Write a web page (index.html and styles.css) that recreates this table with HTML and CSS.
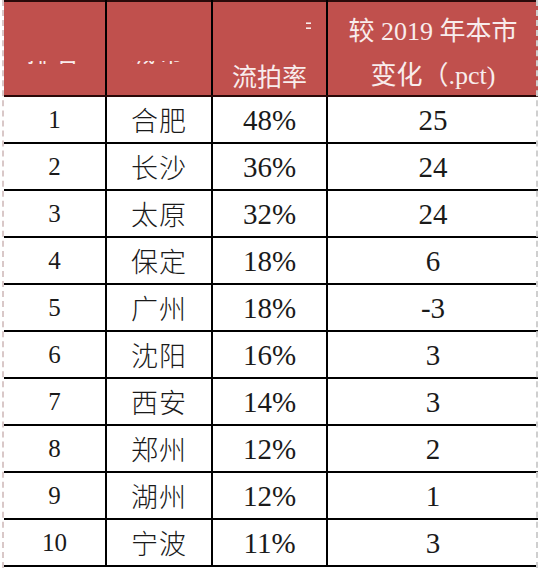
FILE: index.html
```html
<!DOCTYPE html>
<html lang="zh">
<head>
<meta charset="utf-8">
<link rel="stylesheet" href="styles.css">
</head>
<body>
<div class="frame">
<table class="rank-table">
  <colgroup>
    <col class="c-rank"><col class="c-city"><col class="c-rate"><col class="c-chg">
  </colgroup>
  <thead>
    <tr>
      <th class="h-cut"><span class="clip"><span class="clip-in">排名</span></span></th>
      <th class="h-cut"><span class="clip"><span class="clip-in">城市</span></span></th>
      <th class="h-rate"><span class="frag"><span class="frag-in">年</span></span><span class="rate-label">流拍率</span></th>
      <th class="h-chg"><div class="l1">较 2019 年本市</div><div class="l2">变化（.pct)</div></th>
    </tr>
  </thead>
  <tbody>
    <tr><td class="num">1</td><td class="cn">合肥</td><td class="pct">48%</td><td class="chg">25</td></tr>
    <tr><td class="num">2</td><td class="cn">长沙</td><td class="pct">36%</td><td class="chg">24</td></tr>
    <tr><td class="num">3</td><td class="cn">太原</td><td class="pct">32%</td><td class="chg">24</td></tr>
    <tr><td class="num">4</td><td class="cn">保定</td><td class="pct">18%</td><td class="chg">6</td></tr>
    <tr><td class="num">5</td><td class="cn">广州</td><td class="pct">18%</td><td class="chg">-3</td></tr>
    <tr><td class="num">6</td><td class="cn">沈阳</td><td class="pct">16%</td><td class="chg">3</td></tr>
    <tr><td class="num">7</td><td class="cn">西安</td><td class="pct">14%</td><td class="chg">3</td></tr>
    <tr><td class="num">8</td><td class="cn">郑州</td><td class="pct">12%</td><td class="chg">2</td></tr>
    <tr><td class="num">9</td><td class="cn">湖州</td><td class="pct">12%</td><td class="chg">1</td></tr>
    <tr><td class="num">10</td><td class="cn">宁波</td><td class="pct">11%</td><td class="chg">3</td></tr>
  </tbody>
</table>
</div>
</body>
</html>
```

FILE: styles.css
```css
html, body {
  margin: 0;
  padding: 0;
  background: #ffffff;
}

.frame {
  width: 540px;
  height: 568px;
  box-sizing: border-box;
  padding: 0 2px 0 2px;
  position: relative;
  background: #fff;
}

.frame::before,
.frame::after {
  content: "";
  position: absolute;
  top: 0;
  bottom: 0;
  width: 0;
  border-left: 2px dashed #d9c8c8;
}
.frame::before { left: 2px; }
.frame::after { right: 2px; border-left-color: #cfcfcf; }

.rank-table {
  border-collapse: collapse;
  table-layout: fixed;
  width: 534px;
  margin-left: 2px;
  font-family: "Liberation Serif", "Noto Serif CJK SC", "Noto Sans CJK SC", serif;
  color: #1a1a1a;
}

.c-rank { width: 102px; }
.c-city { width: 106px; }
.c-rate { width: 115px; }
.c-chg { width: 211px; }

.rank-table th,
.rank-table td {
  border: 2px solid #000;
  padding: 0;
  text-align: center;
}

.rank-table thead th {
  background: #c0504d;
  color: #f8ecec;
  font-weight: normal;
  height: 93px;
  border-top-color: #2a0a0a;
  border-bottom-color: #2a0808;
  vertical-align: top;
  position: relative;
}

.rank-table thead tr th:first-child { border-left: none; }
.rank-table tr td:first-child { border-left: none; }
.rank-table tr > :last-child { border-right: none; }

.clip {
  display: block;
  margin: 59px auto 0;
  width: 56px;
  height: 3px;
  overflow: hidden;
  position: relative;
}
.clip-in {
  position: absolute;
  left: 0;
  right: 0;
  bottom: 0;
  font-family: "Noto Sans CJK SC", sans-serif;
  font-size: 24px;
  line-height: 24px;
  letter-spacing: 4px;
  color: #f8ecec;
}

.frag {
  position: absolute;
  top: 19px;
  right: 15px;
  width: 5px;
  height: 12px;
  overflow: hidden;
}
.frag-in {
  position: absolute;
  top: -4px;
  left: -14px;
  font-family: "Noto Sans CJK SC", sans-serif;
  font-size: 22px;
  line-height: 22px;
}

.rate-label {
  display: block;
  margin-top: 58px;
  font-family: "Noto Sans CJK SC", sans-serif;
  font-size: 25px;
  line-height: 30px;
}

.h-chg {
  font-size: 26px;
}
.h-chg .l1 {
  margin-top: 14px;
  line-height: 32px;
  font-family: "Liberation Serif", "Noto Sans CJK SC", serif;
}
.h-chg .l2 {
  margin-top: 12px;
  line-height: 32px;
  font-family: "Liberation Serif", "Noto Sans CJK SC", serif;
}

.rank-table tbody td {
  height: 45px;
  vertical-align: middle;
  line-height: 30px;
}

.num {
  font-size: 25px;
}
.cn {
  font-family: "Noto Sans CJK SC", sans-serif;
  font-size: 27px;
  font-weight: 300;
  letter-spacing: 1px;
}
.pct {
  font-size: 29px;
}
.chg {
  font-size: 29px;
}
```
